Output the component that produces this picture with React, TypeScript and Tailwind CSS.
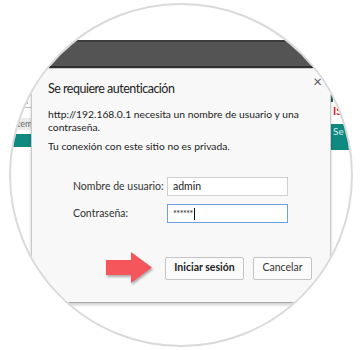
import React from "react";

const font = { fontFamily: 'Lato, "Open Sans", sans-serif' };

function RedArrow() {
    return (
        <svg width="48" height="34" viewBox="0 0 48 34" className="drop-shadow-[1px_2px_1px_rgba(0,0,0,0.3)]">
            <path d="M0 9 H25 V1 L46 16.5 L25 32 V24 H0 Z" fill="#f4565c" />
        </svg>
    );
}

export default function App() {
    return (
        <div className="relative w-[360px] h-[350px] bg-white overflow-hidden" style={font}>
            {/* magnifier circle */}
            <div className="absolute left-[9px] top-[3px] w-[344px] h-[344px] rounded-full border-2 border-[#dadada] overflow-hidden bg-white">
                <div className="w-[360px] h-[350px] ml-[-11px] mt-[-5px]">
                    {/* browser tab bar */}
                    <div className="mt-[40px] h-[28px] bg-[#545454] border-t-2 border-t-[#3c3c3c] border-b-2 border-b-[#2e2e2e]" />

                    <div className="flex">
                        {/* page behind, left */}
                        <div className="w-[31px] pt-[26px] flex flex-col">
                            <div className="ml-[17px] h-[10px] w-[11px] bg-[#8fb4a8]" />
                            <div className="ml-[15px] mt-[3px] h-[1px] bg-[#bbbbbb]" />
                            <div className="mt-[10px] h-[12px] bg-[#ececec] text-[9px] leading-[12px] text-[#666] pl-[17px] whitespace-nowrap">tem</div>
                            <div className="mt-[4px] h-[13px] bg-[#0f8a80]" />
                        </div>

                        {/* dialog */}
                        <div className="relative w-[300px] h-[235px] bg-[#f8f8f8] border border-[#c9c9c9] border-b-[#a9a9a9] shadow-[0_2px_3px_rgba(0,0,0,0.2)] px-[16px] pt-[11px] text-[#222]">
                            <button className="absolute right-[8px] top-[5px] text-[15px] leading-[14px] text-[#555]">×</button>
                            <div className="text-[12.5px] leading-[18px] tracking-[-0.5px] text-[#222]">Se requiere autenticación</div>
                            <p className="mt-[10px] w-[262px] text-[10.3px] leading-[13px]">
                                http://192.168.0.1 necesita un nombre de usuario y una contraseña.
                            </p>
                            <p className="mt-[6px] text-[10.3px] leading-[13px]">Tu conexión con este sitio no es privada.</p>

                            <div className="mt-[24px] grid grid-cols-[94px_121px] gap-y-[8px] ml-[25px] items-center text-[10.5px] text-[#333]">
                                <label className="whitespace-nowrap">Nombre de usuario:</label>
                                <div className="h-[19px] border border-[#d0d0d0] bg-white px-[5px] leading-[17px] text-[#222]">admin</div>
                                <label>Contraseña:</label>
                                <div className="h-[19px] border border-[#6e9fe6] bg-white px-[5px] leading-[17px] text-[#222] flex items-center">
                                    <span className="text-[9px] tracking-[-0.5px]">******</span>
                                    <span className="ml-[1px] w-[1px] h-[12px] bg-[#111]" />
                                </div>
                            </div>

                            <div className="mt-[28px] flex items-center justify-end gap-[9px] pr-[2px]">
                                <div className="mr-[2px]"><RedArrow /></div>
                                <button className="w-[79px] h-[23px] border border-[#c4c4c4] bg-[#fbfbfb] text-[10.5px] font-bold text-[#222] rounded-[2px] whitespace-nowrap">Iniciar sesión</button>
                                <button className="w-[59px] h-[23px] border border-[#c4c4c4] bg-[#fbfbfb] text-[10.5px] text-[#333] rounded-[2px] whitespace-nowrap">Cancelar</button>
                            </div>
                        </div>

                        {/* page behind, right */}
                        <div className="flex-1 pt-[24px] flex flex-col">
                            <div className="w-[2px] h-[10px] bg-[#1f5f66]" />
                            <div className="mt-[2px] pl-[2px] text-[11px] leading-[14px] font-bold text-[#c8202a]">IS</div>
                            <div className="mt-[6px] h-[26px] bg-[#0f8a80] text-[10px] leading-[14px] text-[#d8efec] pl-[2px]">Se</div>
                        </div>
                    </div>
                </div>
            </div>
        </div>
    );
}
